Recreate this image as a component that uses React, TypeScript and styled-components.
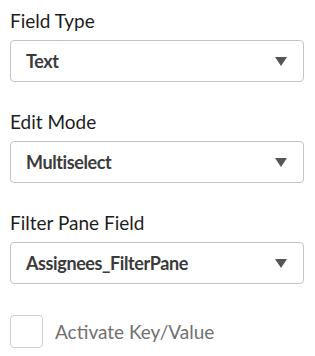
import styled, { createGlobalStyle } from "styled-components";

const GlobalStyle = createGlobalStyle`
  body {
    margin: 0;
    background: #ffffff;
    font-family: Lato, "Open Sans", sans-serif;
  }
`;

type Option = { label: string; value: string };

const fields: Option[] = [
  { label: "Field Type", value: "Text" },
  { label: "Edit Mode", value: "Multiselect" },
  { label: "Filter Pane Field", value: "Assignees_FilterPane" },
];

function App() {
  return (
    <>
      <GlobalStyle />
      <SCPanel>
        {fields.map((f) => (
          <SCField key={f.label}>
            <SCLabel>{f.label}</SCLabel>
            <SCSelect type="button">
              <SCValue>{f.value}</SCValue>
              <SCCaret />
            </SCSelect>
          </SCField>
        ))}
        <SCCheckRow>
          <SCCheckbox type="checkbox" />
          <SCCheckLabel>Activate Key/Value</SCCheckLabel>
        </SCCheckRow>
      </SCPanel>
    </>
  );
}

const SCPanel = styled.div`
  width: 315px;
  box-sizing: border-box;
  padding: 0 11px 0 10px;
  display: flex;
  flex-direction: column;
`;

const SCField = styled.div`
  display: flex;
  flex-direction: column;
  gap: 7px;
  padding-top: 9px;
  padding-bottom: 19px;
`;

const SCLabel = styled.label`
  font-size: 19px;
  line-height: 24px;
  color: #1d1d1d;
`;

const SCSelect = styled.button`
  display: flex;
  align-items: center;
  justify-content: space-between;
  height: 42px;
  width: 100%;
  box-sizing: border-box;
  padding: 0 16px 0 15px;
  background: #ffffff;
  border: 1px solid #c4c4c4;
  border-radius: 4px;
  font-family: inherit;
  cursor: pointer;
`;

const SCValue = styled.span`
  font-size: 18px;
  font-weight: 700;
  letter-spacing: -0.4px;
  color: #3b3b3b;
`;

const SCCaret = styled.span`
  width: 0;
  height: 0;
  border-left: 6px solid transparent;
  border-right: 6px solid transparent;
  border-top: 9px solid #555555;
`;

const SCCheckRow = styled.label`
  display: flex;
  align-items: center;
  gap: 12px;
  padding-top: 12px;
`;

const SCCheckbox = styled.input`
  appearance: none;
  margin: 0;
  width: 33px;
  height: 33px;
  border: 1px solid #cfcfcf;
  border-radius: 4px;
  background: #ffffff;
`;

const SCCheckLabel = styled.span`
  font-size: 19px;
  color: #707070;
`;

export default App;
